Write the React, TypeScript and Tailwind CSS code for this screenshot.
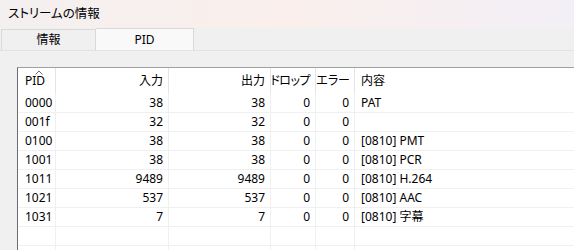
const rows = [
  { pid: '0000', inp: '38', out: '38', drop: '0', err: '0', info: 'PAT' },
  { pid: '001f', inp: '32', out: '32', drop: '0', err: '0', info: '' },
  { pid: '0100', inp: '38', out: '38', drop: '0', err: '0', info: '[0810] PMT' },
  { pid: '1001', inp: '38', out: '38', drop: '0', err: '0', info: '[0810] PCR' },
  { pid: '1011', inp: '9489', out: '9489', drop: '0', err: '0', info: '[0810] H.264' },
  { pid: '1021', inp: '537', out: '537', drop: '0', err: '0', info: '[0810] AAC' },
  { pid: '1031', inp: '7', out: '7', drop: '0', err: '0', info: '[0810] 字幕' },
  { pid: '', inp: '', out: '', drop: '', err: '', info: '' },
  { pid: '', inp: '', out: '', drop: '', err: '', info: '' },
];

const cols = 'grid grid-cols-[38px_113px_102px_45px_39px_1fr]';

export default function App() {
  return (
    <div className="w-[574px] h-[250px] overflow-hidden bg-[#f0f0f0] text-[12px] text-black font-['Noto_Sans','Noto_Sans_CJK_JP',sans-serif] [font-feature-settings:'palt'] leading-none whitespace-nowrap">
      {/* Title */}
      <div className="h-[28px] flex items-center pl-[8px] bg-gradient-to-r from-[#f4f0f0] via-[#faefec] to-[#f2eff6] text-[12.5px]">
        ストリームの情報
      </div>

      {/* Tabs */}
      <div className="h-[22px] flex items-end">
        <div className="ml-[1px] w-[95px] h-[21px] border border-b-0 border-[#d9d9d9] flex items-center justify-center">
          情報
        </div>
        <div className="w-[98px] h-[22px] border border-b-0 border-l-0 border-[#d9d9d9] bg-[#f9f9f9] flex items-center justify-center">
          PID
        </div>
      </div>

      {/* Panel */}
      <div className="border-t border-[#e3e3e3] pt-[16px] pl-[17px]">
        <div className="bg-white border-l border-t border-l-[#6d6d6d] border-t-[#a0a0a0]">
          <div className={`${cols} h-[26px]`}>
            <div className="relative border-r border-[#e5e5e5] pl-[7px] flex items-center">
              PID
              <svg className="absolute left-[17px] top-[2px]" width="8" height="5" viewBox="0 0 8 5">
                <polyline points="0.5,4.5 4,1 7.5,4.5" fill="none" stroke="#6d6d6d" strokeWidth="1" />
              </svg>
            </div>
            <div className="border-r border-[#e5e5e5] pr-[5px] flex items-center justify-end">入力</div>
            <div className="border-r border-[#e5e5e5] pr-[5px] flex items-center justify-end">出力</div>
            <div className="border-r border-[#e5e5e5] pr-[5px] flex items-center justify-end overflow-hidden">
              <span className="tracking-[-0.5px]">ドロップ</span>
            </div>
            <div className="border-r border-[#e5e5e5] pr-[4px] flex items-center justify-end">エラー</div>
            <div className="pl-[6px] flex items-center">内容</div>
          </div>
          {rows.map((r, i) => (
            <div key={i} className={`${cols} h-[19px] border-b border-[#f0f0f0]`}>
              <div className="border-r border-[#f0f0f0] pl-[7px] flex items-center">{r.pid}</div>
              <div className="border-r border-[#f0f0f0] pr-[5px] flex items-center justify-end">{r.inp}</div>
              <div className="border-r border-[#f0f0f0] pr-[5px] flex items-center justify-end">{r.out}</div>
              <div className="border-r border-[#f0f0f0] pr-[5px] flex items-center justify-end">{r.drop}</div>
              <div className="border-r border-[#f0f0f0] pr-[5px] flex items-center justify-end">{r.err}</div>
              <div className="pl-[6px] flex items-center">{r.info}</div>
            </div>
          ))}
        </div>
      </div>
    </div>
  );
}
